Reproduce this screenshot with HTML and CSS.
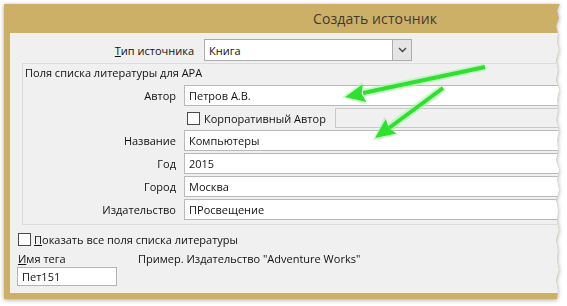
FILE: index.html
```html
<!DOCTYPE html>
<html lang="ru">
<head>
<meta charset="utf-8">
<title>Создать источник</title>
<link rel="stylesheet" href="styles.css">
</head>
<body>
<div class="stage">
  <div class="shadow">
    <div class="dialog">
      <div class="titlebar"><span class="title">Создать источник</span></div>
      <div class="panel">
        <div class="type-row">
          <span class="type-label"><u>Т</u>ип источника</span>
          <div class="select">
            <span class="select-value">Книга</span>
            <span class="select-btn">
              <svg width="9" height="6" viewBox="0 0 9 6"><path d="M1 1 L4.5 4.5 L8 1" fill="none" stroke="#444" stroke-width="1.4"/></svg>
            </span>
          </div>
        </div>
        <div class="group">
          <div class="group-title">Поля списка литературы для APA</div>
          <div class="fields">
            <span class="label">Автор</span><div class="input">Петров А.В.</div>
            <span></span>
            <div class="corp"><span class="checkbox"></span><span class="corp-text">Корпоративный Автор</span><span class="input disabled"></span></div>
            <span class="label">Название</span><div class="input">Компьютеры</div>
            <span class="label">Год</span><div class="input">2015</div>
            <span class="label">Город</span><div class="input">Москва</div>
            <span class="label">Издательство</span><div class="input">ПРосвещение</div>
          </div>
        </div>
        <div class="showall"><span class="checkbox"></span><span><u>П</u>оказать все поля списка литературы</span></div>
        <div class="tag-row"><span class="tag-label"><u>И</u>мя тега</span><span class="example">Пример. Издательство "Adventure Works"</span></div>
        <div class="input tag-input">Пет151</div>
      </div>
    </div>
  </div>
  <svg class="arrows" width="567" height="306" viewBox="0 0 567 306">
    <g fill="#a8f7a8" opacity="0.6">
      <polygon points="484.2,63.5 486,70.5 364,97 362,89"/>
      <polygon points="342,97.5 362.5,81.5 360.5,93.7 367.5,104.5"/>
      <polygon points="441,84.5 445.5,91 391.5,131 386.5,124.5"/>
      <polygon points="373,140.5 384.5,116.5 388.5,128 398.5,134.5"/>
    </g>
    <g fill="#2fe02f">
      <polygon points="484.6,65 485.4,69 363.4,95 362.6,91"/>
      <polygon points="345,97 362.8,84.3 361.7,93.7 366.4,101.9"/>
      <polygon points="441.8,86.4 444.2,89.6 390.2,129.6 387.8,126.4"/>
      <polygon points="375,138 385.8,118.9 388.7,128 396.4,133.5"/>
    </g>
  </svg>
</div>
</body>
</html>
```

FILE: styles.css
```css
html, body {
  margin: 0;
  padding: 0;
  background: #ffffff;
}

.stage {
  position: relative;
  width: 567px;
  height: 306px;
  overflow: hidden;
  background: #ffffff;
  font-family: "Open Sans", "Noto Sans", sans-serif;
  font-size: 11px;
  color: #111111;
}

.shadow {
  padding: 4px 0 0 4px;
  filter: drop-shadow(0 1px 2px rgba(0, 0, 0, 0.35));
}

.dialog {
  width: 556px;
  height: 295px;
  box-sizing: border-box;
  background: #cdb068;
  padding: 0 0 6px 6px;
  display: flex;
  flex-direction: column;
  clip-path: polygon(0 0, 556px 0, 553px 6px, 555px 14px, 552px 22px, 554px 30px, 553px 38px, 555px 46px, 552px 56px, 554px 66px, 552px 76px, 555px 86px, 553px 96px, 554px 106px, 552px 116px, 555px 126px, 553px 136px, 554px 146px, 552px 156px, 555px 166px, 553px 176px, 555px 186px, 552px 196px, 554px 206px, 553px 216px, 555px 226px, 552px 236px, 554px 246px, 553px 256px, 555px 266px, 552px 276px, 554px 286px, 553px 295px, 0 295px);
}

.titlebar {
  height: 29px;
  flex: none;
  display: flex;
  align-items: center;
  padding-left: 303px;
}

.title {
  font-size: 14px;
  color: #3f3a30;
  letter-spacing: 0.1px;
}

.panel {
  flex: 1;
  background: #f0f0f0;
  border: 1px solid #f8f2e2;
  border-right: none;
  display: flex;
  flex-direction: column;
  min-height: 0;
}

.type-row {
  display: flex;
  align-items: center;
  margin-top: 5px;
  height: 22px;
}

.type-label {
  width: 183px;
  text-align: right;
  flex: none;
}

.select {
  margin-left: 10px;
  width: 208px;
  height: 22px;
  box-sizing: border-box;
  border: 1px solid #acacac;
  background: #ffffff;
  display: flex;
  align-items: stretch;
}

.select-value {
  flex: 1;
  padding-left: 4px;
  display: flex;
  align-items: center;
}

.select-btn {
  width: 18px;
  background: #e5e5e5;
  border-left: 1px solid #acacac;
  display: flex;
  align-items: center;
  justify-content: center;
}

.group {
  margin: 2px 0 0 11px;
  border: 1px solid #dcdcdc;
  border-right: none;
  padding-bottom: 4px;
}

.group-title {
  height: 16px;
  line-height: 16px;
  padding: 1px 0 0 2px;
  margin-bottom: 4px;
}

.fields {
  display: grid;
  grid-template-columns: 153px 1fr;
  grid-template-rows: 21px 20px 21px 21px 21px 21px;
  column-gap: 8px;
  row-gap: 2px;
}

.label {
  text-align: right;
  align-self: center;
}

.input {
  box-sizing: border-box;
  border: 1px solid #b9b9b9;
  background: #ffffff;
  padding-left: 4px;
  display: flex;
  align-items: center;
  height: 100%;
}

.corp {
  display: flex;
  align-items: center;
  padding-left: 3px;
}

.checkbox {
  width: 13px;
  height: 13px;
  box-sizing: border-box;
  border: 1px solid #4a4a4a;
  background: #ffffff;
  flex: none;
}

.corp-text {
  margin-left: 4px;
  width: 131px;
  flex: none;
}

.input.disabled {
  flex: 1;
  background: #f0f0f0;
  border-color: #c9c9c9;
}

.showall {
  display: flex;
  align-items: center;
  gap: 3px;
  margin: 7px 0 0 7px;
  height: 15px;
}

.tag-row {
  display: flex;
  align-items: center;
  margin: 4px 0 0 7px;
  height: 15px;
}

.tag-label {
  width: 120px;
  flex: none;
}

.tag-input {
  margin: 1px 0 0 6px;
  width: 100px;
  height: 19px;
  border-color: #b4b4b4;
}

.arrows {
  position: absolute;
  left: 0;
  top: 0;
  pointer-events: none;
}
```
